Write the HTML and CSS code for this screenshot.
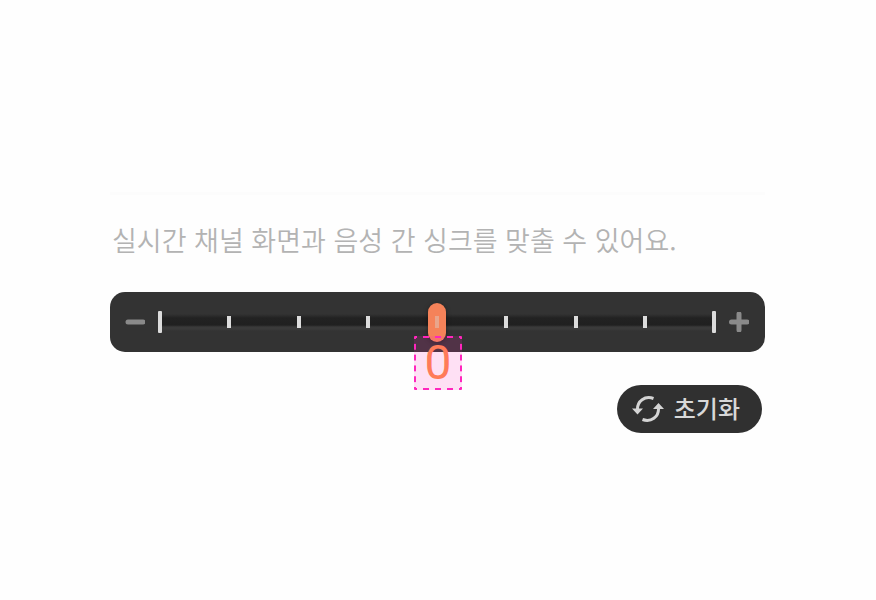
FILE: index.html
```html
<!DOCTYPE html>
<html lang="ko">
<head>
<meta charset="utf-8">
<meta name="viewport" content="width=device-width, initial-scale=1">
<title>싱크 조절</title>
<link rel="stylesheet" href="styles.css">
</head>
<body>
<main class="sync">
  <label class="description" for="offset">실시간 채널 화면과 음성 간 싱크를 맞출 수 있어요.</label>
  <div class="bar">
    <button class="step" type="button" aria-label="감소">
      <svg viewBox="0 0 20 20"><path d="M3 10h15"/></svg>
    </button>
    <div class="scale">
      <div class="ticks">
        <i class="tick end"></i><i class="tick"></i><i class="tick"></i><i class="tick"></i><i class="tick"></i><i class="tick"></i><i class="tick"></i><i class="tick"></i><i class="tick end"></i>
      </div>
      <input class="range" id="offset" type="range" min="-4" max="4" value="0">
      <output class="value" for="offset">0</output>
    </div>
    <button class="step plus" type="button" aria-label="증가">
      <svg viewBox="0 0 20 20"><path d="M2.5 10h15.500M10 2v16"/></svg>
    </button>
  </div>
  <button class="reset" type="button">
    <svg class="reset-icon" viewBox="0 0 32 28">
      <path class="arc" d="M5.500 15C5 6 13 .5 21.500 3.500M26.500 13C27 22 19 27.500 10.500 24.500"/>
      <path class="head" d="M0 13.500h11L5.500 19.500zM21 14h11L26.500 8z"/>
    </svg>
    <span>초기화</span>
  </button>
</main>
</body>
</html>
```
FILE: styles.css
```css
* {
  box-sizing: border-box;
}

body {
  margin: 0;
  background: #fefefe;
  font-family: "Noto Sans CJK KR", sans-serif;
}

.sync {
  display: flex;
  flex-direction: column;
  margin: 192px 111px 0 110px;
  border-top: 3px solid #fcfcfc;
}

.description {
  margin: 25px 0 32px 2px;
  color: #b3b3b3;
  font-size: 27px;
  font-weight: 350;
  line-height: 40px;
  white-space: nowrap;
}

.bar {
  display: flex;
  align-items: center;
  gap: 13px;
  height: 60px;
  padding: 0 16px 0 15px;
  border-radius: 15px;
  background: #333;
}

.step {
  flex: none;
  width: 20px;
  height: 20px;
  padding: 0;
  border: 0;
  background: none;
}

.step svg {
  display: block;
  fill: none;
  stroke: #8a8a8a;
  stroke-width: 5;
  stroke-linecap: round;
}

.scale {
  position: relative;
  flex: 1;
  height: 40px;
}

.ticks {
  display: flex;
  align-items: center;
  justify-content: space-between;
  height: 40px;
  background: linear-gradient(#333 12px, #222 16px, #202020 23px, #3a3a3a 25px, #3a3a3a 27px, #333 29px);
}

.tick {
  width: 4px;
  height: 12px;
  background: #dcdcdc;
}

.end {
  height: 22px;
  border-radius: 1px;
}

.range {
  position: absolute;
  inset: 0 -7px;
  width: calc(100% + 14px);
  height: 40px;
  margin: 0;
  appearance: none;
  background: none;
}

.range::-webkit-slider-thumb {
  appearance: none;
  width: 18px;
  height: 39px;
  border-radius: 9px;
  background: linear-gradient(#e9a58b, #e9a58b) center / 4px 12px no-repeat #f58259;
  box-shadow: 0 1px 5px #0006;
}

.value {
  --across: linear-gradient(90deg, #ff26bd 25%, #0000 25% 75%, #ff26bd 75%);
  --down: linear-gradient(#ff26bd 25%, #0000 25% 75%, #ff26bd 75%);
  position: absolute;
  top: 34px;
  left: calc(50% - 23px);
  width: 48px;
  height: 54px;
  border-radius: 1px;
  background:
    var(--across) top left / 12px 2px repeat-x,
    var(--across) bottom left / 12px 2px repeat-x,
    var(--down) top left / 2px 20% repeat-y,
    var(--down) top right / 2px 20% repeat-y,
    #ff33bb26;
  color: #ff7b59;
  font: 400 48px/54px Roboto, sans-serif;
  text-align: center;
}

.reset {
  display: flex;
  align-items: center;
  align-self: flex-end;
  gap: 10px;
  height: 48px;
  margin: 33px 3px 0 0;
  padding: 0 22px 0 15px;
  border: 0;
  border-radius: 24px;
  background: #303030;
  color: #d8d8d8;
  font: 500 24px/46px "Noto Sans CJK KR", sans-serif;
}

.reset span {
  padding-bottom: 2px;
}

.reset-icon {
  width: 32px;
  height: 28px;
}

.arc {
  fill: none;
  stroke: #d4d4d4;
  stroke-width: 3;
}

.head {
  fill: #d4d4d4;
}
```
